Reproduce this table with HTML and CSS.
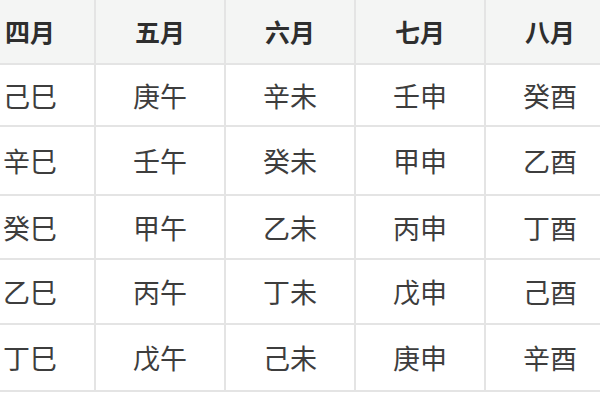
FILE: index.html
```html
<!DOCTYPE html>
<html lang="zh">
<head>
<meta charset="utf-8">
<link rel="stylesheet" href="styles.css">
</head>
<body>
<table class="ganzhi">
  <thead>
    <tr><th>四月</th><th>五月</th><th>六月</th><th>七月</th><th>八月</th></tr>
  </thead>
  <tbody>
    <tr><td>己巳</td><td>庚午</td><td>辛未</td><td>壬申</td><td>癸酉</td></tr>
    <tr><td>辛巳</td><td>壬午</td><td>癸未</td><td>甲申</td><td>乙酉</td></tr>
    <tr><td>癸巳</td><td>甲午</td><td>乙未</td><td>丙申</td><td>丁酉</td></tr>
    <tr><td>乙巳</td><td>丙午</td><td>丁未</td><td>戊申</td><td>己酉</td></tr>
    <tr><td>丁巳</td><td>戊午</td><td>己未</td><td>庚申</td><td>辛酉</td></tr>
  </tbody>
</table>
</body>
</html>
```
FILE: styles.css
```css
html, body {
  margin: 0;
  padding: 0;
  background: #ffffff;
  overflow: hidden;
}
body {
  width: 600px;
  height: 400px;
  font-family: "Noto Sans CJK SC", "Noto Sans", sans-serif;
  color: #3a3a3a;
}
.ganzhi {
  border-collapse: collapse;
  table-layout: fixed;
  width: 652px;
  margin-left: -36px;
  margin-top: -2px;
}
.ganzhi th,
.ganzhi td {
  width: 128px;
  padding: 0;
  text-align: center;
  vertical-align: middle;
  border: 2px solid #e4e4e4;
  line-height: 1;
}
.ganzhi th {
  height: 63px;
  background: #f4f5f4;
  font-size: 25px;
  font-weight: 700;
  color: #2e2e2e;
}
.ganzhi td {
  font-size: 27px;
  font-weight: 400;
  color: #3d3d3d;
}
.ganzhi tbody tr:nth-child(1) td { height: 60px; }
.ganzhi tbody tr:nth-child(2) td { height: 67px; }
.ganzhi tbody tr:nth-child(3) td { height: 62px; }
.ganzhi tbody tr:nth-child(4) td { height: 63px; }
.ganzhi tbody tr:nth-child(5) td { height: 65px; }
```
